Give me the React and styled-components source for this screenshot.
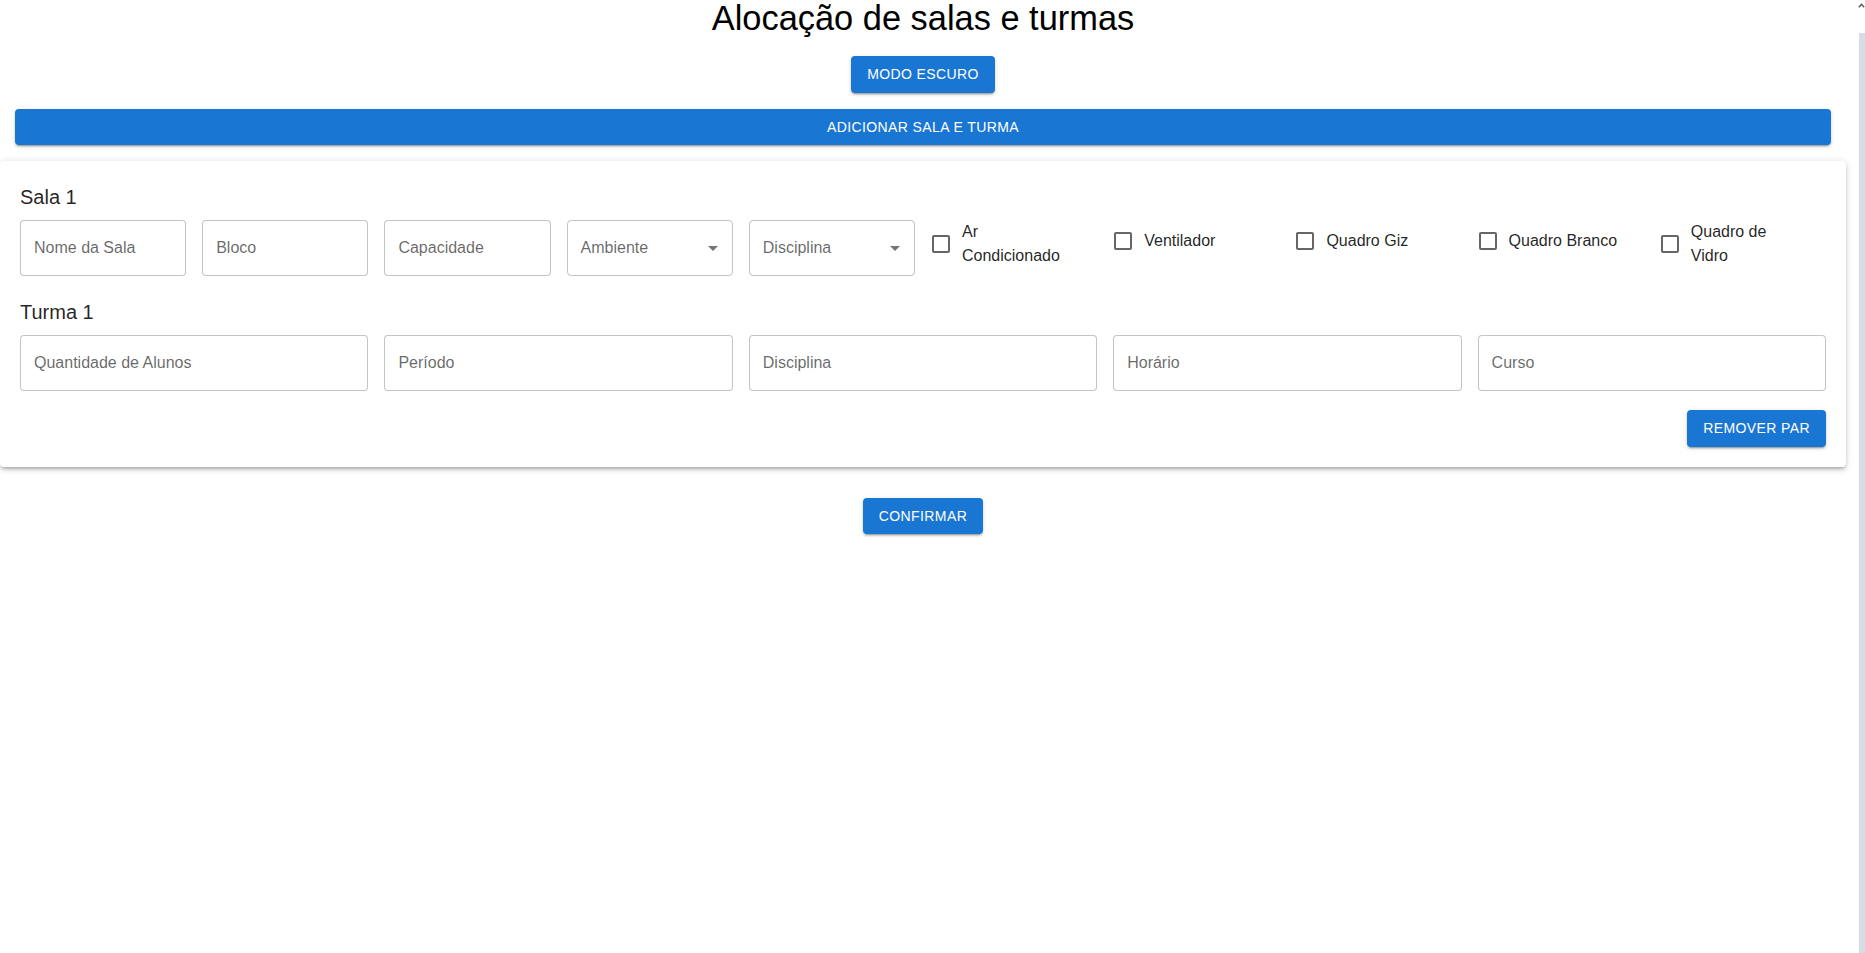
import React from "react";
import styled, { createGlobalStyle } from "styled-components";

const GlobalStyle = createGlobalStyle`
  html, body {
    margin: 0;
    padding: 0;
    background: #ffffff;
    overflow: hidden;
  }
  body {
    font-family: "Liberation Sans", Arial, Helvetica, sans-serif;
  }
  * { box-sizing: border-box; }
`;

const Page = styled.div`
  display: flex;
  width: 100%;
  height: 100vh;
`;

const Main = styled.main`
  flex: 1;
  min-width: 0;
  display: flex;
  flex-direction: column;
  align-items: center;
`;

const ScrollRail = styled.aside`
  width: 19px;
  flex: none;
  display: flex;
  flex-direction: column;
  align-items: flex-end;
`;

const RailArrow = styled.svg`
  width: 7px;
  height: 5px;
  margin: 3px 0 0;
  flex: none;
`;

const RailThumb = styled.div`
  width: 6px;
  flex: 1;
  margin-top: 25px;
  background: #d5dde6;
`;

const Title = styled.h1`
  margin: -3px 0 0;
  font-size: 34.4px;
  line-height: 42px;
  font-weight: 400;
  color: #000;
`;

const Button = styled.button`
  height: 36.5px;
  padding: 0 16px;
  border: none;
  border-radius: 4px;
  background: #1976d2;
  color: #fff;
  font-family: inherit;
  font-size: 14px;
  font-weight: 500;
  letter-spacing: 0.02857em;
  text-transform: uppercase;
  cursor: pointer;
  box-shadow: 0px 3px 1px -2px rgba(0, 0, 0, 0.2), 0px 2px 2px 0px rgba(0, 0, 0, 0.14),
    0px 1px 5px 0px rgba(0, 0, 0, 0.12);
  margin-top: ${(p) => p.$mt || 0}px;
  align-self: ${(p) => (p.$full ? "stretch" : "auto")};
  margin-left: ${(p) => (p.$full ? "15px" : "0")};
  margin-right: ${(p) => (p.$full ? "15px" : "0")};
`;

const Card = styled.section`
  align-self: stretch;
  margin-top: 16px;
  padding: 20px;
  border-radius: 4px;
  background: #fff;
  box-shadow: 0px 3px 3px -2px rgba(0, 0, 0, 0.2), 0px 3px 4px 0px rgba(0, 0, 0, 0.14),
    0px 1px 8px 0px rgba(0, 0, 0, 0.12);
  display: flex;
  flex-direction: column;
`;

const SectionTitle = styled.h2`
  margin: ${(p) => p.$mt || 0}px 0 7px;
  font-size: 20px;
  line-height: 32px;
  font-weight: 500;
  color: rgba(0, 0, 0, 0.87);
`;

const FieldRow = styled.div`
  display: grid;
  grid-template-columns: repeat(${(p) => p.$cols}, minmax(0, 1fr));
  column-gap: 16px;
  align-items: start;
`;

const TextInput = styled.input`
  width: 100%;
  height: 56px;
  padding: 0 13px;
  border: 1px solid rgba(0, 0, 0, 0.23);
  border-radius: 4px;
  background: #fff;
  font-family: inherit;
  font-size: 16px;
  color: rgba(0, 0, 0, 0.87);
  outline: none;
  &::placeholder {
    color: rgba(0, 0, 0, 0.6);
    opacity: 1;
  }
`;

const SelectBox = styled.div`
  height: 56px;
  padding: 0 7px 0 13px;
  border: 1px solid rgba(0, 0, 0, 0.23);
  border-radius: 4px;
  display: flex;
  align-items: center;
  justify-content: space-between;
  font-size: 16px;
  color: rgba(0, 0, 0, 0.6);
  cursor: pointer;
`;

const ArrowIcon = styled.svg`
  width: 24px;
  height: 24px;
  fill: rgba(0, 0, 0, 0.54);
  flex: none;
`;

const CheckLabel = styled.label`
  display: inline-flex;
  align-items: center;
  margin-left: -11px;
  margin-right: 16px;
  cursor: pointer;
`;

const CheckBox = styled.span`
  padding: 9px;
  display: inline-flex;
  flex: none;
`;

const CheckIcon = styled.svg`
  width: 24px;
  height: 24px;
  fill: rgba(0, 0, 0, 0.6);
`;

const CheckText = styled.span`
  max-width: 112px;
  font-size: 16px;
  line-height: 24px;
  color: rgba(0, 0, 0, 0.87);
`;

const CardFooter = styled.div`
  display: flex;
  justify-content: flex-end;
  margin-top: 19px;
`;

const Select = ({ label }) => (
  <SelectBox>
    <span>{label}</span>
    <ArrowIcon viewBox="0 0 24 24">
      <path d="M7 10l5 5 5-5z" />
    </ArrowIcon>
  </SelectBox>
);

const Check = ({ label }) => (
  <div>
    <CheckLabel>
      <CheckBox>
        <CheckIcon viewBox="0 0 24 24">
          <path d="M19 5v14H5V5h14m0-2H5c-1.11 0-2 .9-2 2v14c0 1.1.89 2 2 2h14c1.1 0 2-.9 2-2V5c0-1.1-.9-2-2-2z" />
        </CheckIcon>
      </CheckBox>
      <CheckText>{label}</CheckText>
    </CheckLabel>
  </div>
);

export default function App() {
  const salaInputs = ["Nome da Sala", "Bloco", "Capacidade"];
  const salaChecks = ["Ar Condicionado", "Ventilador", "Quadro Giz", "Quadro Branco", "Quadro de Vidro"];
  const turmaInputs = ["Quantidade de Alunos", "Período", "Disciplina", "Horário", "Curso"];

  return (
    <>
      <GlobalStyle />
      <Page>
        <Main>
          <Title>Alocação de salas e turmas</Title>
          <Button $mt={17}>Modo Escuro</Button>
          <Button $mt={16} $full>
            Adicionar Sala e Turma
          </Button>
          <Card>
            <SectionTitle>Sala 1</SectionTitle>
            <FieldRow $cols={10}>
              {salaInputs.map((p) => (
                <TextInput key={p} placeholder={p} />
              ))}
              <Select label="Ambiente" />
              <Select label="Disciplina" />
              {salaChecks.map((c) => (
                <Check key={c} label={c} />
              ))}
            </FieldRow>
            <SectionTitle $mt={20}>Turma 1</SectionTitle>
            <FieldRow $cols={5}>
              {turmaInputs.map((p) => (
                <TextInput key={p} placeholder={p} />
              ))}
            </FieldRow>
            <CardFooter>
              <Button>Remover Par</Button>
            </CardFooter>
          </Card>
          <Button $mt={31}>Confirmar</Button>
        </Main>
        <ScrollRail>
          <RailArrow viewBox="0 0 7 5">
            <path d="M0.8 4.2 L3.5 1.2 L6.2 4.2" fill="none" stroke="#555" strokeWidth="1.3" />
          </RailArrow>
          <RailThumb />
        </ScrollRail>
      </Page>
    </>
  );
}
